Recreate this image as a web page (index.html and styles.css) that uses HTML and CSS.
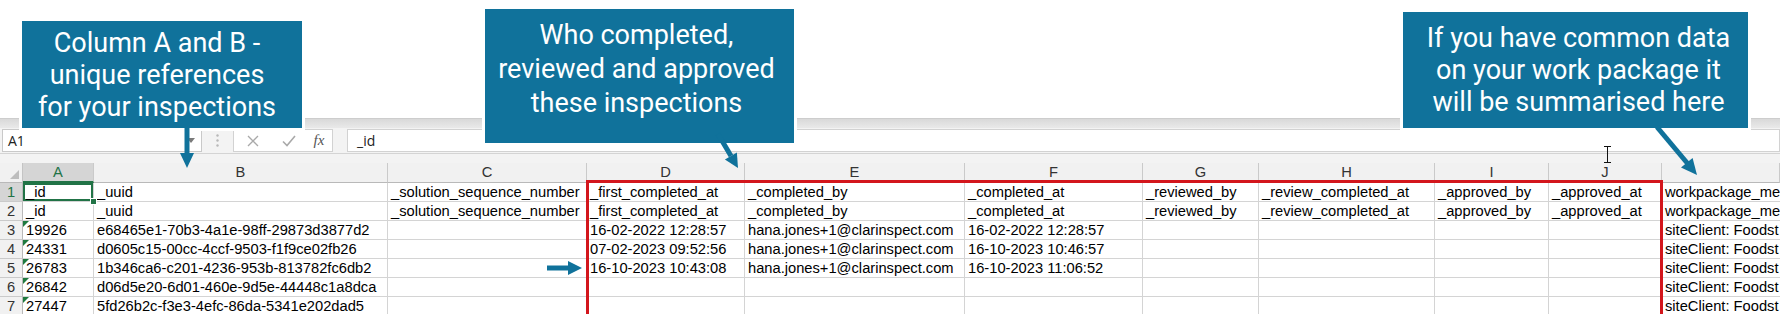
FILE: index.html
```html
<!DOCTYPE html>
<html lang="en">

<head>
  <meta charset="UTF-8" />
  <meta name="viewport" content="width=device-width, initial-scale=1.0" />
  <title>Inspection export</title>
  <link rel="stylesheet" href="styles.css">
</head>

<body>
  <div class="stage">
    <div class="slide-space"></div>
    <div class="ribbon-edge"></div>

    <div class="formula-bar">
      <div class="name-box">
        <span>A1</span>
        <svg width="8" height="5" viewBox="0 0 8 5"><path d="M0 0h8L4 5z" fill="#7a7a7a" /></svg>
      </div>
      <div class="grip">
        <svg width="3" height="13" viewBox="0 0 3 13" fill="#b8b8b8">
          <circle cx="1.5" cy="1.5" r="1.2" />
          <circle cx="1.5" cy="6.5" r="1.2" />
          <circle cx="1.5" cy="11.5" r="1.2" />
        </svg>
      </div>
      <div class="fx-buttons">
        <span class="btn">
          <svg width="12" height="12" viewBox="0 0 12 12"><path d="M1 1l10 10M11 1L1 11" stroke="#a9a9a9" stroke-width="1.3" /></svg>
        </span>
        <span class="btn">
          <svg width="14" height="12" viewBox="0 0 14 12"><path d="M1 6.5l4 4L13 1" fill="none" stroke="#a9a9a9" stroke-width="1.6" /></svg>
        </span>
        <span class="btn fx">fx</span>
      </div>
      <div class="formula-input">_id</div>
    </div>

    <div class="bar-gap"></div>

    <div class="sheet">
      <!-- column headers -->
      <div class="corner"></div>
      <div class="col-head active">A</div>
      <div class="col-head">B</div>
      <div class="col-head">C</div>
      <div class="col-head">D</div>
      <div class="col-head">E</div>
      <div class="col-head">F</div>
      <div class="col-head">G</div>
      <div class="col-head">H</div>
      <div class="col-head">I</div>
      <div class="col-head">J</div>
      <div class="col-head"></div>

      <!-- row 1 -->
      <div class="row-head active">1</div>
      <div class="cell selected">_id</div>
      <div class="cell">_uuid</div>
      <div class="cell">_solution_sequence_number</div>
      <div class="cell">_first_completed_at</div>
      <div class="cell">_completed_by</div>
      <div class="cell">_completed_at</div>
      <div class="cell">_reviewed_by</div>
      <div class="cell">_review_completed_at</div>
      <div class="cell">_approved_by</div>
      <div class="cell">_approved_at</div>
      <div class="cell last">workpackage_me</div>

      <!-- row 2 -->
      <div class="row-head">2</div>
      <div class="cell">_id</div>
      <div class="cell">_uuid</div>
      <div class="cell">_solution_sequence_number</div>
      <div class="cell">_first_completed_at</div>
      <div class="cell">_completed_by</div>
      <div class="cell">_completed_at</div>
      <div class="cell">_reviewed_by</div>
      <div class="cell">_review_completed_at</div>
      <div class="cell">_approved_by</div>
      <div class="cell">_approved_at</div>
      <div class="cell last">workpackage_me</div>

      <!-- row 3 -->
      <div class="row-head">3</div>
      <div class="cell text-num">19926</div>
      <div class="cell">e68465e1-70b3-4a1e-98ff-29873d3877d2</div>
      <div class="cell"></div>
      <div class="cell">16-02-2022 12:28:57</div>
      <div class="cell">hana.jones+1@clarinspect.com</div>
      <div class="cell">16-02-2022 12:28:57</div>
      <div class="cell"></div>
      <div class="cell"></div>
      <div class="cell"></div>
      <div class="cell"></div>
      <div class="cell last">siteClient: Foodst</div>

      <!-- row 4 -->
      <div class="row-head">4</div>
      <div class="cell text-num">24331</div>
      <div class="cell">d0605c15-00cc-4ccf-9503-f1f9ce02fb26</div>
      <div class="cell"></div>
      <div class="cell">07-02-2023 09:52:56</div>
      <div class="cell">hana.jones+1@clarinspect.com</div>
      <div class="cell">16-10-2023 10:46:57</div>
      <div class="cell"></div>
      <div class="cell"></div>
      <div class="cell"></div>
      <div class="cell"></div>
      <div class="cell last">siteClient: Foodst</div>

      <!-- row 5 -->
      <div class="row-head">5</div>
      <div class="cell text-num">26783</div>
      <div class="cell">1b346ca6-c201-4236-953b-813782fc6db2</div>
      <div class="cell"></div>
      <div class="cell">16-10-2023 10:43:08</div>
      <div class="cell">hana.jones+1@clarinspect.com</div>
      <div class="cell">16-10-2023 11:06:52</div>
      <div class="cell"></div>
      <div class="cell"></div>
      <div class="cell"></div>
      <div class="cell"></div>
      <div class="cell last">siteClient: Foodst</div>

      <!-- row 6 -->
      <div class="row-head">6</div>
      <div class="cell text-num">26842</div>
      <div class="cell">d06d5e20-6d01-460e-9d5e-44448c1a8dca</div>
      <div class="cell"></div>
      <div class="cell"></div>
      <div class="cell"></div>
      <div class="cell"></div>
      <div class="cell"></div>
      <div class="cell"></div>
      <div class="cell"></div>
      <div class="cell"></div>
      <div class="cell last">siteClient: Foodst</div>

      <!-- row 7 -->
      <div class="row-head">7</div>
      <div class="cell text-num">27447</div>
      <div class="cell">5fd26b2c-f3e3-4efc-86da-5341e202dad5</div>
      <div class="cell"></div>
      <div class="cell"></div>
      <div class="cell"></div>
      <div class="cell"></div>
      <div class="cell"></div>
      <div class="cell"></div>
      <div class="cell"></div>
      <div class="cell"></div>
      <div class="cell last">siteClient: Foodst</div>
    </div>

    <!-- highlight and callouts on top of the sheet -->
    <div class="red-frame"></div>

    <div class="callout callout-refs">Column A and B -<br>unique references<br>for your inspections</div>
    <div class="callout callout-people">Who completed,<br>reviewed and approved<br>these inspections</div>
    <div class="callout callout-package">If you have common data<br>on your work package it<br>will be summarised here</div>

    <svg class="arrows" width="1780" height="314" viewBox="0 0 1780 314">
      <g stroke="#10729b" stroke-width="5">
        <line x1="187" y1="128" x2="187" y2="156" />
        <line x1="718" y1="134" x2="731" y2="156" />
        <line x1="1657" y1="127" x2="1688" y2="164" />
        <line x1="547" y1="268" x2="570" y2="268" />
      </g>
      <g fill="#10729b">
        <polygon points="180,153 194,153 187,168" />
        <polygon points="724.9,159.4 736.9,152.4 738,168" />
        <polygon points="1681,167.5 1692.6,157.9 1697,175" />
        <polygon points="568,261 568,275 582,268" />
      </g>
    </svg>

    <svg class="ibeam" width="9" height="18" viewBox="0 0 9 18">
      <path d="M1 .5h7M4.5 .5v16M1 16.5h7" stroke="#111" stroke-width="1" fill="none" />
    </svg>
  </div>
</body>

</html>
```

FILE: styles.css
```css
body {
  margin: 0;
  background: #fff;
  overflow: hidden;
}

.stage {
  position: relative;
  width: 1780px;
  height: 314px;
  overflow: hidden;
  font-family: "Liberation Sans", Arial, sans-serif;
}

.slide-space {
  height: 118px;
}

.ribbon-edge {
  height: 10px;
  box-sizing: border-box;
  border-top: 1px solid #cdcdcd;
  background: linear-gradient(#d9d9d9, #e9e9e9);
}

/* formula bar */
.formula-bar {
  display: flex;
  height: 26px;
  box-sizing: border-box;
  padding: 1px 0;
  background: #f3f3f3;
  border-bottom: 1px solid #d4d4d4;
  font-family: "Open Sans", "Noto Sans", sans-serif;
  font-size: 14px;
  color: #222;
}

.name-box {
  width: 200px;
  margin-left: 2px;
  box-sizing: border-box;
  display: flex;
  align-items: center;
  justify-content: space-between;
  padding: 0 6px 0 5px;
  background: #fff;
  border: 1px solid #c9c9c9;
}

.grip {
  width: 31px;
  display: flex;
  align-items: center;
  justify-content: center;
}

.fx-buttons {
  width: 100px;
  box-sizing: border-box;
  display: grid;
  grid-template-columns: 37px 35px 1fr;
  background: #fff;
  border: 1px solid #d2d2d2;
}

.btn {
  display: flex;
  align-items: center;
  justify-content: center;
}

.fx {
  font-family: "Liberation Serif", serif;
  font-style: italic;
  font-size: 15px;
  color: #555;
}

.formula-input {
  flex: 1;
  margin-left: 14px;
  display: flex;
  align-items: center;
  padding-left: 9px;
  background: #fff;
  border: 1px solid #d2d2d2;
}

.bar-gap {
  height: 9px;
  background: #f3f3f3;
}

/* sheet grid */
.sheet {
  display: grid;
  grid-template-columns: 23px 71px 294px 199px 158px 220px 178px 116px 176px 114px 113px 118px;
  grid-template-rows: 20px repeat(7, 19px);
  font-size: 14.7px;
  color: #000;
}

.corner,
.col-head,
.row-head,
.cell {
  box-sizing: border-box;
  white-space: nowrap;
  overflow: hidden;
}

.corner {
  position: relative;
  background: #f1f1f1;
  border-right: 1px solid #c4c4c4;
  border-bottom: 1px solid #b9b9b9;
}

.corner::after {
  content: "";
  position: absolute;
  right: 3px;
  bottom: 3px;
  border-left: 9px solid transparent;
  border-bottom: 9px solid #bdbdbd;
}

.col-head {
  background: #f1f1f1;
  border-right: 1px solid #cacaca;
  border-bottom: 1px solid #b9b9b9;
  text-align: center;
  line-height: 19px;
  color: #333;
}

.col-head.active {
  background: #d5d5d5;
  color: #217346;
  border-bottom: 2px solid #217346;
  line-height: 18px;
}

.row-head {
  background: #f1f1f1;
  border-right: 1px solid #b9b9b9;
  border-bottom: 1px solid #cacaca;
  text-align: center;
  line-height: 18px;
  color: #333;
}

.row-head.active {
  background: #d5d5d5;
  color: #217346;
}

.cell {
  position: relative;
  padding: 0 3px;
  line-height: 18px;
  border-right: 1px solid #d4d4d4;
  border-bottom: 1px solid #d4d4d4;
}

.cell.last {
  padding-right: 0;
  border-right: 0;
}

.cell.selected {
  overflow: visible;
  box-shadow: inset 0 0 0 2px #217346;
}

.cell.selected::after {
  content: "";
  position: absolute;
  right: -4px;
  bottom: -4px;
  width: 5px;
  height: 5px;
  background: #217346;
  border: 1px solid #fff;
  z-index: 1;
}

.cell.text-num::before {
  content: "";
  position: absolute;
  left: 0;
  top: 0;
  border-top: 6px solid #1f7a3f;
  border-right: 6px solid transparent;
}

/* overlays */
.red-frame {
  position: absolute;
  left: 586px;
  top: 180px;
  width: 1077px;
  height: 200px;
  box-sizing: border-box;
  border: 3px solid #d3161c;
}

.callout {
  position: absolute;
  box-sizing: border-box;
  background: #10729b;
  color: #fff;
  font-family: Roboto, "Noto Sans", sans-serif;
  font-size: 27px;
  text-align: center;
  box-shadow: 0 0 0 3px #fff;
}

.callout-refs {
  left: 22px;
  top: 21px;
  width: 280px;
  height: 107px;
  padding: 6px 10px 0 0;
  line-height: 32px;
}

.callout-people {
  left: 485px;
  top: 9px;
  width: 309px;
  height: 134px;
  padding: 9px 6px 0 0;
  line-height: 34px;
}

.callout-package {
  left: 1403px;
  top: 12px;
  width: 345px;
  height: 116px;
  padding: 10px 0 0 6px;
  line-height: 32px;
}

.arrows {
  position: absolute;
  left: 0;
  top: 0;
  pointer-events: none;
}

.ibeam {
  position: absolute;
  left: 1603px;
  top: 146px;
}
```
